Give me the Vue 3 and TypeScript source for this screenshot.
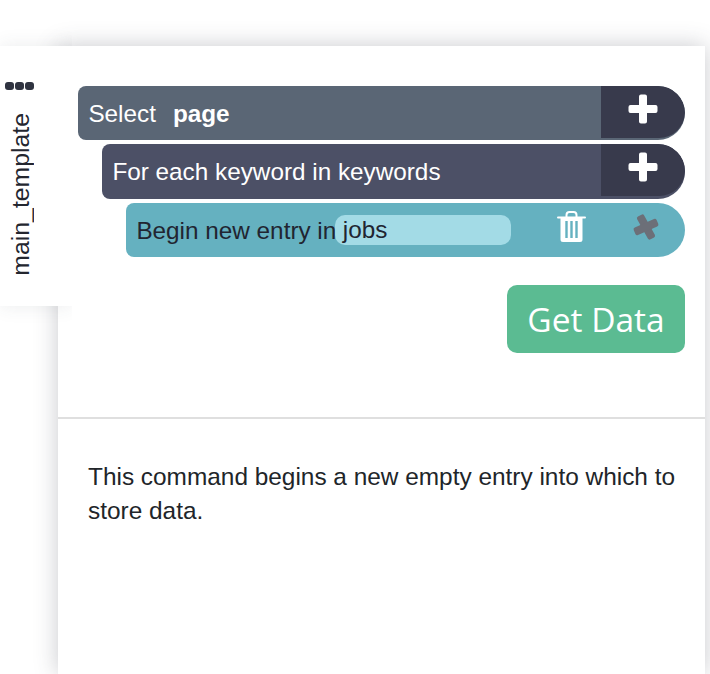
<script setup lang="ts">
const description: string = 'This command begins a new empty entry into which to store data.'
</script>

<template>
  <div class="page">
    <aside class="tab">
      <div class="dots"><i></i><i></i><i></i></div>
      <span class="tab-label">main_template</span>
    </aside>
    <main class="panel">
      <section class="top">
        <div class="row row-select">
          <span class="label">Select</span>
          <strong class="value">page</strong>
          <button class="add" aria-label="add">
            <svg width="30" height="30" viewBox="0 0 30 30"><path fill="#fff" d="M13 .5h4a2 2 0 0 1 2 2V11h8.500a2 2 0 0 1 2 2v4a2 2 0 0 1-2 2H19v8.500a2 2 0 0 1-2 2h-4a2 2 0 0 1-2-2V19H2.500a2 2 0 0 1-2-2v-4a2 2 0 0 1 2-2H11V2.500a2 2 0 0 1 2-2z" /></svg>
          </button>
        </div>
        <div class="row row-each">
          <span class="label">For each keyword in keywords</span>
          <button class="add" aria-label="add">
            <svg width="30" height="30" viewBox="0 0 30 30"><path fill="#fff" d="M13 .5h4a2 2 0 0 1 2 2V11h8.500a2 2 0 0 1 2 2v4a2 2 0 0 1-2 2H19v8.500a2 2 0 0 1-2 2h-4a2 2 0 0 1-2-2V19H2.500a2 2 0 0 1-2-2v-4a2 2 0 0 1 2-2H11V2.500a2 2 0 0 1 2-2z" /></svg>
          </button>
        </div>
        <div class="row row-begin">
          <span class="label">Begin new entry in</span>
          <span class="field">jobs</span>
          <svg class="trash" width="29" height="31" viewBox="0 0 29 31">
            <path d="M1 6.500h27" stroke="#fff" stroke-width="2" stroke-linecap="round" />
            <path d="M9.500 6V4a3 3 0 0 1 3-3h4a3 3 0 0 1 3 3v2" fill="none" stroke="#fff" stroke-width="2" />
            <path fill-rule="evenodd" fill="#fff" d="M3.500 7h22v21.500a2.500 2.500 0 0 1-2.500 2.500H6a2.500 2.500 0 0 1-2.500-2.500zM8.300 10v17h2.400V10zM13.300 10v17h2.400V10zM18.300 10v17h2.400V10z" />
          </svg>
          <svg class="cross" width="28" height="28" viewBox="0 0 28 28">
            <g fill="#6c6f78">
              <rect x="10" y="1" width="8" height="26" rx="2" transform="rotate(-29 14 14)" />
              <rect x="1.500" y="10" width="25" height="8" rx="2" transform="rotate(-24 14 14)" />
            </g>
          </svg>
        </div>
        <div class="actions">
          <button class="get-data">Get Data</button>
        </div>
      </section>
      <section class="description">
        <p>{{ description }}</p>
      </section>
    </main>
  </div>
</template>

<style>
html, body { margin: 0; background: #fff; overflow: hidden; }
</style>

<style scoped>
.page {
  position: relative;
  width: 710px;
  height: 674px;
  overflow: hidden;
  font-family: "Liberation Sans", Arial, sans-serif;
}
.panel {
  box-sizing: border-box;
  width: 647px;
  height: 628px;
  margin-left: 58px;
  position: relative;
  top: 46px;
  background: #fff;
  box-shadow: 0 0 22px rgba(60, 66, 80, 0.28);
}
.tab {
  position: absolute;
  z-index: 2;
  left: 0;
  top: 46px;
  width: 72px;
  height: 260px;
  background: #fff;
  box-shadow: 0 0 18px rgba(60, 66, 80, 0.1);
  clip-path: inset(-24px 0 -24px 0);
}
.dots {
  position: absolute;
  left: 5px;
  top: 35.500px;
  display: flex;
  gap: 1.500px;
}
.dots i {
  width: 8.500px;
  height: 8.500px;
  border-radius: 3px;
  background: #2f3340;
}
.tab-label {
  position: absolute;
  left: 8px;
  bottom: 30px;
  writing-mode: vertical-rl;
  transform: rotate(180deg);
  font-size: 24.800px;
  line-height: 25px;
  color: #23262f;
}
.top {
  box-sizing: border-box;
  height: 373px;
  padding: 40px 20px 0;
  display: flex;
  flex-direction: column;
  border-bottom: 2px solid #dfdfdf;
}
.row {
  display: flex;
  align-items: center;
  box-sizing: border-box;
  border-radius: 8px 27px 27px 8px;
  font-size: 24.300px;
  overflow: hidden;
  flex-shrink: 0;
}
.row-select {
  height: 54px;
  margin-bottom: 4px;
  background: #5a6675;
  color: #fff;
  padding-left: 10.400px;
}
.row-each {
  height: 55px;
  margin-left: 24px;
  margin-bottom: 4px;
  background: #4c5066;
  color: #fff;
  padding-left: 10.400px;
}
.row-begin {
  height: 54px;
  margin-left: 48px;
  background: #65b1c0;
  color: #212531;
  padding-left: 10.400px;
}
.row-select .label,
.row-select .value,
.row-begin .label { position: relative; top: 1px; }
.value {
  margin-left: 17px;
  font-weight: 700;
}
.add {
  align-self: flex-start;
  margin-left: auto;
  width: 84px;
  height: 52px;
  padding: 0;
  border: 0;
  border-radius: 0 27px 27px 0;
  background: #383a4c;
  display: flex;
  align-items: center;
  justify-content: center;
}
.add svg { position: relative; top: -3px; left: 0; }
.field {
  box-sizing: border-box;
  width: 176px;
  height: 30px;
  margin-left: -1px;
  padding-left: 7.500px;
  line-height: 30px;
  border-radius: 10px;
  background: #a3dbe6;
}
.trash {
  margin-left: 46px;
  position: relative;
  top: -3.500px;
}
.cross {
  margin-left: 46px;
  position: relative;
  top: -3.500px;
}
.actions {
  display: flex;
  justify-content: flex-end;
  margin-top: 28px;
}
.get-data {
  width: 178px;
  height: 68px;
  padding: 0;
  border: 0;
  border-radius: 10px;
  background: #5bbb92;
  color: #fff;
  font-family: "Open Sans", "Noto Sans", sans-serif;
  font-size: 33.500px;
}
.description {
  padding: 41px 30px 0;
}
.description p {
  margin: 0;
  font-size: 24.400px;
  line-height: 34px;
  color: #212529;
}
</style>
